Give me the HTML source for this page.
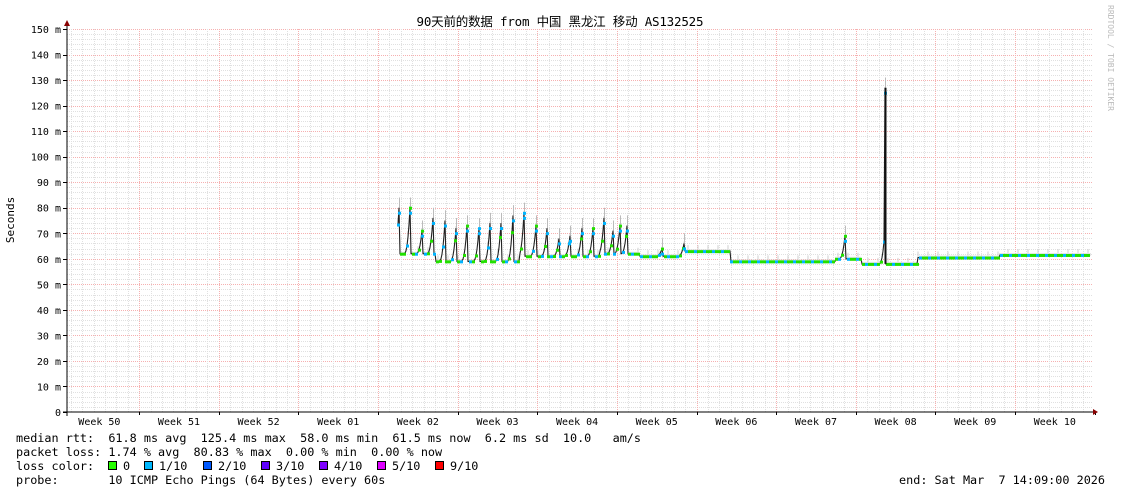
<!DOCTYPE html>
<html><head><meta charset="utf-8"><style>
html,body{margin:0;padding:0;background:#fff;width:1121px;height:494px;overflow:hidden}
svg text{font-family:"DejaVu Sans Mono","Liberation Mono","Noto Sans CJK SC",monospace;font-size:10px;fill:#000}
.t{font-size:12.5px}
.L{font-size:11.8px}
</style></head><body>
<svg id="g" width="1121" height="494" xmlns="http://www.w3.org/2000/svg">
<rect width="1121" height="494" fill="#fff"/>
<g id="grid"></g>
<g id="data"></g>
<line x1="67" y1="24" x2="67" y2="416" stroke="#000"/>
<line x1="63" y1="412" x2="1095" y2="412" stroke="#000"/>
<path d="M64,26 L67,20 L70,26Z" fill="#800"/>
<path d="M1093,409 L1098,412 L1093,415Z" fill="#800"/>
<text class="t" x="560" y="26" text-anchor="middle" textLength="287">90天前的数据 from  中国 黑龙江 移动 AS132525</text>
<text x="14" y="220" transform="rotate(-90 14 220)" text-anchor="middle" style="font-size:11px">Seconds</text>
<text x="1108" y="5" transform="rotate(90 1108 5)" style="fill:#bbb;font-size:8px">RRDTOOL / TOBI OETIKER</text>
<g id="ylab" text-anchor="end"></g>
<g id="xlab" text-anchor="middle"></g>
<text class="L" x="16" y="442" xml:space="preserve">median rtt:  61.8 ms avg  125.4 ms max  58.0 ms min  61.5 ms now  6.2 ms sd  10.0   am/s</text>
<text class="L" x="16" y="456" xml:space="preserve">packet loss: 1.74 % avg  80.83 % max  0.00 % min  0.00 % now</text>
<text class="L" x="16" y="470" xml:space="preserve">loss color:  </text>
<text class="L" x="16" y="484" xml:space="preserve">probe:       10 ICMP Echo Pings (64 Bytes) every 60s</text>
<text class="L" x="1105" y="484" text-anchor="end" xml:space="preserve">end: Sat Mar  7 14:09:00 2026</text>
<g id="leg"></g>
</svg>
<script>
var NS="http://www.w3.org/2000/svg";
function el(p,t,a,txt){var e=document.createElementNS(NS,t);for(var k in a)e.setAttribute(k,a[k]);if(txt!=null)e.textContent=txt;document.getElementById(p).appendChild(e);return e;}
var X0=67,X1=1093,Y0=412,PU=383/150;
function Y(v){return Y0-v*PU;}
for(var v=2;v<=150;v+=2){var y=Math.round(Y(v))+.5;var maj=v%10==0;
el("grid","line",{x1:X0,x2:X1,y1:y,y2:y,stroke:maj?"#f6b0b0":"#e0e0e0","stroke-dasharray":"1,1","stroke-width":1});}
var wk=79.62,w0=139.2;
for(var i=-7;i<100;i++){var x=w0+i*wk/7;if(x<X0+1||x>X1)continue;var maj=((i%7)+7)%7==0;
el("grid","line",{x1:Math.round(x)+.5,x2:Math.round(x)+.5,y1:29,y2:412,stroke:maj?"#f6b0b0":"#e0e0e0","stroke-dasharray":"1,1"});}
for(var v=0;v<=150;v+=10){var y=Y(v);el("ylab","text",{x:61,y:y+4},v==0?"0":v+" m");el("grid","line",{x1:63,x2:67,y1:Math.round(y)+.5,y2:Math.round(y)+.5,stroke:"#000"});}
var weeks=["50","51","52","01","02","03","04","05","06","07","08","09","10"];
for(var i=0;i<13;i++){el("xlab","text",{x:w0-wk/2+i*wk,y:425},"Week "+weeks[i]);
el("grid","line",{x1:Math.round(w0+i*wk)+.5,x2:Math.round(w0+i*wk)+.5,y1:412,y2:415,stroke:"#000"});}
function base(x){if(x<436)return 62;if(x<520)return 59;if(x<600)return 61;if(x<640)return 62;if(x<685)return 61;if(x<731)return 63;if(x<836)return 59;if(x<862)return 60;if(x<918)return 58;if(x<1000)return 60.5;return 61.5;}
var spikes={399:80,410:80,422:71,433:76,445:75,456:72,467:73,479:72,490:74,501:74,513:77,524:78,536:73,547:72,559:68,570:69,582:72,593:72,604:76,613:71,620:73,627:73,662:64,684:66,845:69,885:127};
var pts=[];for(var x=398;x<=1090;x++){var v=base(x);
for(var s in spikes){s=+s;var d=s-x;if(d>=0&&d<6){var pk=spikes[s];var sc=s==885?0.2:1;v=Math.max(v,base(x)+(pk-base(x))*(d==0?1:sc*Math.pow(1-d/6,2.5)));}}
pts.push([x,v]);}
var smoke="",line="";
pts.forEach(function(p,i){var y=Y(p[1]);line+=(i?"L":"M")+p[0]+","+y.toFixed(1);
if(i%2==0)smoke+="M"+p[0]+","+(y-2-(i%10==0?4:0))+"v"+(3+(i%10==0?4:0));});
el("data","path",{d:smoke,stroke:"#cfcfcf","stroke-width":1,fill:"none"});
for(var s in spikes){el("data","line",{x1:+s+.5,x2:+s+.5,y1:Y(spikes[s]+4),y2:Y(spikes[s]),stroke:"#bbb"});}
el("data","path",{d:line,stroke:"#222","stroke-width":1.1,fill:"none"});
pts.forEach(function(p,i){var y=Y(p[1]);if(i%3==0){var c=(i%9==0)?"#00b4ff":"#22e000";el("data","rect",{x:p[0]-1,y:y-1,width:3,height:3,fill:c});}});
for(var s in spikes){el("data","rect",{x:+s-1,y:Y(spikes[s])+4,width:3,height:3,fill:"#00b4ff"});}
el("data","line",{x1:885.5,x2:885.5,y1:Y(127),y2:Y(58),stroke:"#111","stroke-width":2});
var L=[["#26ff00","0"],["#00b8ff","1/10"],["#0059ff","2/10"],["#5e00ff","3/10"],["#7e00ff","4/10"],["#dd00ff","5/10"],["#ff0000","9/10"]];
var lx=[108,144,203,261,319,377,435];
L.forEach(function(l,i){el("leg","rect",{x:lx[i]+.5,y:461.5,width:8,height:8,fill:l[0],stroke:"#000"});el("leg","text",{x:lx[i]+15,y:470,"class":"L"},l[1]);});
</script>
</body></html>
